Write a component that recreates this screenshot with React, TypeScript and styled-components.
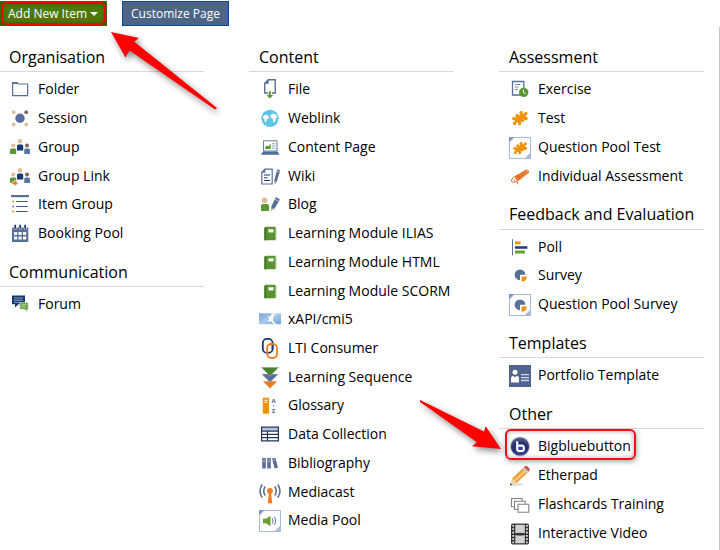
import React from 'react';
import styled, { createGlobalStyle, css } from 'styled-components';

const GlobalStyle = createGlobalStyle`
  *, *::before, *::after { box-sizing: border-box; }
  html { background: #fff; }
  body {
    margin: 0;
    overflow: hidden;
    color: #000;
    font-family: 'Open Sans', 'Noto Sans', sans-serif;
    font-size: 14px;
  }
`;

const Page = styled.div`
  display: flex;
  flex-direction: column;
  min-height: 100vh;
  margin-left: -1px;
`;

const Toolbar = styled.div`
  display: flex;
  gap: 15px;
  padding-top: 1px;
`;

const ButtonSlot = styled.div`
  position: relative;
`;

const Button = styled.button<{ $tone: 'green' | 'blue' }>`
  display: flex;
  align-items: center;
  gap: 3px;
  height: 25px;
  padding: 0 8px;
  border: 1px solid;
  border-radius: 0;
  color: #fff;
  font: 12px/17px 'Open Sans', 'Noto Sans', sans-serif;
  white-space: nowrap;
  cursor: pointer;
  ${({ $tone }) =>
    $tone === 'green'
      ? css`
          background: #4c7a06;
          border-color: #3c6400;
          box-shadow: inset 0 0 6px #2c4a00;
        `
      : css`
          background: #4c6586;
          border-color: #07489a;
        `}
`;

const Caret = styled.span`
  border: 4px solid transparent;
  border-top-color: #fff;
  border-bottom: 0;
`;

const ButtonMark = styled.span`
  position: absolute;
  inset: 1px 1px 1px 2px;
  border: 2px solid #f50008;
  border-radius: 6px;
  pointer-events: none;
`;

const Panel = styled.main`
  flex: 1;
  display: grid;
  grid-template-columns: repeat(3, 1fr);
  gap: 45px;
  margin-top: 1px;
  padding: 19px 15px 0 0;
  border-right: 1px solid #c4c4c4;
`;

const Group = styled.section`
  padding-bottom: 9px;
`;

const GroupTitle = styled.h2`
  margin: 0 0 7px;
  padding: 0 0 3px 10px;
  border-bottom: 1px solid #d9d9d9;
  font-size: 16px;
  font-weight: 400;
  line-height: 1.4;
  white-space: nowrap;
`;

const Items = styled.ul`
  margin: 0;
  padding: 0;
  list-style: none;
`;

const Item = styled.li`
  display: flex;
`;

const ItemLink = styled.a`
  position: relative;
  display: flex;
  gap: 7px;
  padding-left: 10px;
  color: #000;
  text-decoration: none;
`;

const Icon = styled.svg`
  flex: none;
  width: 22px;
  height: 22px;
`;

const Label = styled.span`
  padding-bottom: 9px;
  line-height: 1.41;
  white-space: nowrap;
`;

const ItemMark = styled.span`
  position: absolute;
  inset: -7px -5px 5px 6px;
  border: 2px solid #f01018;
  border-radius: 6px;
  box-shadow: inset 0 0 5px #0005, 1px 2px 5px #0005;
  pointer-events: none;
`;

const Arrow = styled.svg<{ $spot: 'button' | 'item' }>`
  position: absolute;
  z-index: 1;
  overflow: visible;
  pointer-events: none;
  fill: #fe0000;
  filter: drop-shadow(2px 3px 3px #0007);
  ${({ $spot }) =>
    $spot === 'button'
      ? css`
          top: 31px;
          left: 112px;
          width: 107px;
          height: 78px;
        `
      : css`
          top: -36px;
          left: -79px;
          width: 82px;
          height: 51px;
        `}
`;

const SLATE = '#586f98';
const NAVY = '#17376f';
const GREEN = '#5a9632';
const ORANGE = '#f07a22';
const AMBER = '#ee9209';
const TAN = '#dfbd98';
const BROWN = '#7d6660';

const people = (
  <>
    <circle cx="4.300" cy="8.600" r="2" fill={TAN} />
    <path d="M1 17v-4q0-1.600 1.600-1.600h3.400q1.200 0 1.200 1.600v4z" fill={GREEN} />
    <circle cx="11" cy="4.200" r="2.200" fill={TAN} />
    <path d="M8 13.500v-4.500q0-1.600 1.600-1.600h3q1.600 0 1.600 1.600v4.500z" fill={NAVY} />
    <circle cx="18" cy="8.600" r="2" fill={BROWN} />
    <path d="M15.200 17v-4q0-1.600 1.600-1.600h2.600q1.600 0 1.600 1.600v4z" fill="#56779f" />
  </>
);

const book = (
  <>
    <path d="M6.500 3.700H16.500V17.300H5.400V4.700z" fill="#5c9331" />
    <path d="M5.400 4.700H7.200V17.300H5.400z" fill="#3f7424" />
    <path d="M16.500 4.200h.8v12.600h-.8z" fill="#86b06a" />
    <path d="M9.400 6.300h5.200v3.100H9.400z" fill="#fff" />
  </>
);

const puzzle = (
  <g fill={AMBER}>
    <path d="M4.500 10.500L9 9.500 12 5.500 17 6.500 16.500 10.500 13 12 10.500 15.500 5.500 14.500z" />
    <circle cx="12.300" cy="5" r="2" />
    <circle cx="16.700" cy="5.600" r="1.900" />
    <circle cx="16.700" cy="10.500" r="2" />
    <circle cx="8.300" cy="8" r="1.900" />
    <circle cx="4.900" cy="10.500" r="1.800" />
    <circle cx="5.800" cy="15.200" r="1.900" />
    <circle cx="10.300" cy="15.300" r="2" />
    <circle cx="13.500" cy="12.500" r="1.700" />
    <circle cx="14.500" cy="4.500" r="1" fill="#fff" />
    <circle cx="8.100" cy="15.700" r="1.100" fill="#fff" />
    <circle cx="5" cy="12.900" r=".8" fill="#fff" />
    <circle cx="17.700" cy="8" r=".8" fill="#fff" />
  </g>
);

const pie = (
  <>
    <path d="M11 9.800V15.200A5.400 5.400 0 1 1 16.400 9.800z" fill={SLATE} />
    <path d="M12.600 11.600H18A5.200 5.200 0 0 1 12.600 16.800z" fill={AMBER} />
  </>
);

const poolFrame = (
  <>
    <path d="M0 0h22v22H0z" fill="#a9badb" />
    <path d="M5 1H21V16L16 21H1V5z" fill="#fff" />
    <path d="M0 0h5L0 5z" fill="#8297c0" />
  </>
);

const pencil = (
  <>
    <path d="M18.200 3.200l3 1-3.300 11-2.100 3-.6-3.500z" fill={SLATE} />
    <path d="M17.700 4.800l3 1" stroke="#fff" strokeWidth=".6" />
    <path d="M15.400 15l.4 3.200 1.900-2.500z" fill={TAN} />
  </>
);

const icons: Record<string, React.ReactNode> = {
  folder: (
    <>
      <path d="M3.600 5V3.600H8.200L9 5H18.600V16.600H3.600z" fill="none" stroke={SLATE} strokeWidth="1.200" />
      <path d="M3 3h5.200l1 2H3z" fill={SLATE} />
    </>
  ),
  session: (
    <>
      <circle cx="11" cy="10.300" r="4.700" fill="#5a6da0" />
      <circle cx="4.700" cy="4.200" r="1.900" fill={TAN} />
      <circle cx="17.200" cy="4.200" r="1.900" fill={BROWN} />
      <circle cx="4.700" cy="16.500" r="1.900" fill={TAN} />
      <circle cx="17.200" cy="16.500" r="1.900" fill={TAN} />
    </>
  ),
  group: people,
  groupLink: (
    <>
      {people}
      <path d="M3 15.800h2.600v-2l3.600 3.400-3.600 3.400v-2H3z" fill={ORANGE} stroke="#fff" strokeWidth=".5" />
    </>
  ),
  itemGroup: (
    <>
      <path d="M2 1h18v2.200H2z" fill={SLATE} />
      <path d="M7 7.500h11.600M7 12.500h11.600M7 17.500h11.600" stroke="#44557f" strokeWidth="1.100" />
      <circle cx="4.200" cy="7.500" r=".9" fill={AMBER} />
      <circle cx="4.200" cy="12.500" r=".9" fill={SLATE} />
      <circle cx="4.200" cy="17.500" r=".9" fill={AMBER} />
    </>
  ),
  booking: (
    <>
      <path d="M3 4.500h16.300V19H3z" fill={SLATE} />
      <path d="M4.800 2h2.600v4.200H4.800zM10 2h2.400v4.200H10zM14.900 2h2.600v4.200h-2.600z" fill="#fff" />
      <path d="M5.300 1.800h1.700v4H5.300zM10.300 1.800H12v4h-1.700zM15.300 1.800H17v4h-1.700z" fill={NAVY} />
      <path d="M5 9h3.200v3H5zM9.500 9h3.200v3H9.500zM14 9h3.200v3H14zM5 13.500h3.200v3H5zM9.500 13.500h3.200v3H9.500zM14 13.500h3.200v3H14z" fill="#fff" />
    </>
  ),
  forum: (
    <>
      <path d="M3 1.500h13v8.800H9.500L6 13.500V10.300H3z" fill={NAVY} />
      <path d="M5 4h9M5 6.200h9M5 8.300h6" stroke="#a9b8d3" strokeWidth=".8" />
      <path d="M10.800 8.500H19.300v6.800h-1v2.500l-2.700-2.500H10.800z" fill="#67a340" stroke="#fff" strokeWidth=".5" />
      <path d="M12.500 10.800h5M12.500 12.900h4" stroke="#d5e7c8" strokeWidth=".8" />
    </>
  ),
  file: (
    <>
      <path d="M9 14H5.700V4.300L9.300.8H16.200V14H13" fill="none" stroke={SLATE} strokeWidth="1.400" />
      <path d="M5.300 4.700L9.700.5v4.200z" fill={SLATE} />
      <path d="M9.800 12.300h2v3.600h2.400l-3.400 3.700-3.400-3.700h2.400z" fill={GREEN} />
    </>
  ),
  web: (
    <>
      <circle cx="11" cy="10.300" r="8.600" fill="#5fc4e8" />
      <path d="M4 8.500q1.500-2 4.200-1.600l.8 1.400 1 .4-.6 1.800-2 .9-.2 3.200-1.500-1-.3-2.500-1.300-1zM11 7.500l2.200-1.800 3.500.6 1.600 2.500-1.500 1.600-.5 3.200-1.600.8-1-2.200.1-2-1.900-.3z" fill="#fff" />
    </>
  ),
  contentPage: (
    <>
      <path d="M4.500 3.800H18V14H4.500z" fill="#fff" stroke="#6b7da1" strokeWidth="1" />
      <path d="M6.200 12V9.800l2-1 1.500.4 2-2.600V12z" fill={GREEN} />
      <path d="M13 6.800h3.500M13 9h3.500M13 11.200h3.500" stroke="#8493b3" strokeWidth=".9" />
      <path d="M4 14.500h14.500l2 3.300H2z" fill="#4e6b9c" />
    </>
  ),
  wiki: (
    <>
      <path d="M6 3.200H13.200V18H2.800V6.300z" fill="none" stroke={SLATE} strokeWidth="1.200" />
      <path d="M2.500 6.700L6.300 2.800v3.900z" fill={SLATE} />
      <path d="M5 9h6M5 11.800h3.500M5 14.500h6" stroke={NAVY} strokeWidth="1" />
      {pencil}
    </>
  ),
  blog: (
    <>
      <circle cx="5.700" cy="6.200" r="2.800" fill={TAN} />
      <path d="M2 17v-5q0-2 2-2h4q2 0 2 2v5z" fill={GREEN} />
      <path d="M16.800 3l4.200 2.400-5.500 9-3.400 2.200.3-4.200z" fill={SLATE} />
      <path d="M15.800 5l4 2.400" stroke="#fff" strokeWidth=".6" />
      <path d="M12.300 13.500l-.3 3.300 3-1.600z" fill={TAN} />
    </>
  ),
  book,
  xapi: (
    <>
      <defs>
        <linearGradient id="sky" x1="0" y1="0" x2="1" y2="1">
          <stop offset="0" stopColor="#7ba6da" />
          <stop offset=".5" stopColor="#a8caee" />
          <stop offset="1" stopColor="#6fa0d6" />
        </linearGradient>
      </defs>
      <path d="M0 4.300h22v10.900H0z" fill="url(#sky)" />
      <path d="M14.500 4.300q-3.400 1.200-2.500 3.800-1-1.600-3.400-.4 2 .6 1.800 2.300-.2 1.400-1.800 2.200 2.800 1.200 3.800-.5.300 2.500 3.500 3.500h2q-4.500-2.200-4-5.600.4-3.200 3.600-5.300z" fill="#fff" />
    </>
  ),
  lti: (
    <g fill="none" strokeWidth="1.800">
      <rect x="3.800" y=".9" width="9.800" height="14" rx="4.200" stroke={NAVY} />
      <rect x="8.200" y="6" width="9.800" height="14" rx="4.200" stroke={ORANGE} />
      <path d="M13.600 7v4" stroke={NAVY} />
    </g>
  ),
  sequence: (
    <>
      <path d="M4 14.200H18.200L11 21.600z" fill={ORANGE} />
      <path d="M2.500 7H19.500L11 15.400z" fill={SLATE} stroke="#fff" strokeWidth=".3" />
      <path d="M2 .2H20L11 9.200z" fill="#4c8030" stroke="#fff" strokeWidth=".3" />
    </>
  ),
  glossary: (
    <>
      <path d="M3.800 2.700h6.300v16H3.800z" fill={AMBER} />
      <path d="M5.200 5.300h3.500M5.200 7.200h3.500" stroke="#fff" strokeWidth=".9" />
      <g fill="#4f628d" fontFamily="Open Sans, sans-serif" fontSize="6" fontWeight="700">
        <text x="12.500" y="8">A</text>
        <text x="12.700" y="18">Z</text>
      </g>
      <path d="M14 10.800h1.300" stroke="#4f628d" />
    </>
  ),
  data: (
    <>
      <path d="M2.600 3.200H19.400V16.800H2.600z" fill="#fff" />
      <path d="M3 3.500h16v3.400H3z" fill="#b7c4df" />
      <path d="M2.600 3.200H19.400V16.800H2.600zM2.600 7.200H19.400M2.600 10.400H19.400M2.600 13.600H19.400M8.500 7.200V16.800" fill="none" stroke="#243460" strokeWidth="1.200" />
    </>
  ),
  bibliography: (
    <>
      <path d="M3.200 5h3.600v10.500H3.200zM8.200 5h3.600v10.500H8.200zM13 5.500l3.400-.8 2.600 10-3.400.8z" fill="#5b6e96" />
      <path d="M4.300 7h1.400M4.300 8.700h1.400M9.300 7h1.400M9.300 8.700h1.400M14.300 7.300l1.600-.4" stroke="#fff" strokeWidth=".7" />
    </>
  ),
  mediacast: (
    <>
      <circle cx="11" cy="9" r="2.900" fill={ORANGE} />
      <path d="M10 11h2l1.300 10.300H8.700z" fill={ORANGE} />
      <path d="M6.200 4.500q-3 4.500 0 9M3.200 2.500q-4.400 6.500 0 13M15.800 4.500q3 4.500 0 9M18.800 2.500q4.400 6.500 0 13" fill="none" stroke={SLATE} strokeWidth="1.600" />
    </>
  ),
  mediaPool: (
    <>
      {poolFrame}
      <path d="M4 8.800h3L11.500 5.800v10.400L7 13.200H4z" fill="#6a9f2d" />
      <path d="M13.200 8.300q1.600 2.700 0 5.400M15.400 6.900q2.500 4.100 0 8.200" fill="none" stroke="#7489b3" strokeWidth="1.100" />
    </>
  ),
  exercise: (
    <>
      <path d="M3.500 2.500H14.800V16H3.500z" fill="#fff" stroke={SLATE} strokeWidth="1.300" />
      <path d="M5.800 5.500h5.500M5.800 8h3.500M5.800 10.500h3" stroke="#6679a2" strokeWidth=".9" />
      <circle cx="14.700" cy="13.400" r="4.700" fill={GREEN} />
      <path d="M14.500 10.600V13.600l2.300 1.300" fill="none" stroke="#fff" strokeWidth=".9" />
    </>
  ),
  test: puzzle,
  testPool: (
    <>
      {poolFrame}
      <g transform="translate(1.500 2) scale(.88)">{puzzle}</g>
    </>
  ),
  assessment: (
    <>
      <path d="M5 10.500L16.700 3.800q2.800-.8 3.300 1.400.3 1.600-1 2.400L8.500 15.500z" fill="#e77a30" />
      <path d="M7.800 9.200l3.800 4" stroke="#b94d10" strokeWidth="1" />
      <path d="M5 11.300q-3 1.500-2.500 4.200 1.600 1.800 3.400.2.300-1.800-1.500-1.700M5.800 15.800l2.500-.2.200 2.800" fill="none" stroke="#d9713a" strokeWidth="1" />
      <circle cx="18.300" cy="5.600" r="1.100" fill="#f4a165" />
    </>
  ),
  poll: (
    <>
      <path d="M3.500 2.300v16" stroke={SLATE} strokeWidth="1" />
      <path d="M6 4.400h5.500v3H6z" fill={AMBER} />
      <path d="M6 9.200h12.400v2.600H6z" fill="#243f82" />
      <path d="M6 13.500h10v3H6z" fill="#68a033" />
    </>
  ),
  survey: pie,
  surveyPool: (
    <>
      {poolFrame}
      <g transform="translate(0 1)">{pie}</g>
    </>
  ),
  portfolio: (
    <>
      <path d="M0 0h22v22H0z" fill="#51648f" />
      <circle cx="6" cy="7.300" r="2.500" fill="#fff" />
      <path d="M2 17.500v-4q0-2.500 2-2.800l2 1.500 2-1.500q2 .3 2 2.800v4z" fill="#fff" />
      <path d="M12 9.700h8M12 12.600h8M12 15.500h8" stroke="#d3daea" strokeWidth="1.300" />
    </>
  ),
  bigblue: (
    <>
      <defs>
        <radialGradient id="ball" cx=".5" cy=".8" r=".8">
          <stop offset="0" stopColor="#3d4f9c" />
          <stop offset=".6" stopColor="#252c6c" />
          <stop offset="1" stopColor="#5c648f" />
        </radialGradient>
      </defs>
      <circle cx="11" cy="10.500" r="9.900" fill="#b9bdd2" />
      <circle cx="11" cy="10.500" r="9.100" fill="url(#ball)" />
      <path d="M8.200 5.200v7.800q0 2 2 2h2.600q2 0 2-2v-1.400q0-2-2-2H8.500" fill="none" stroke="#fff" strokeWidth="2.100" />
    </>
  ),
  etherpad: (
    <>
      <path d="M.5 20.800h12l2-2.300H3z" fill="#0002" />
      <path d="M3 13.500L14.300 2.800l4.800 4.500L7.500 18.200z" fill="#f5a13a" />
      <path d="M5 15.200L16.300 4.500l1.300 1.200L6.200 16.600z" fill="#ffd28a" />
      <path d="M3 13.500L1 20.500l6.500-2.300z" fill="#ecd3ab" />
      <path d="M1.600 18.300L1 20.500l2.200-.8z" fill="#333" />
      <path d="M13.200 3.800l1.600-1.500 4.900 4.500L18 8.400z" fill="#c9ccd3" />
      <path d="M14.800 2.300L16 1.100q1-.8 2.200.2l2 2q1 1.200.3 2.300l-.8 1.200z" fill="#cf5550" />
    </>
  ),
  cards: (
    <g fill="#fff" stroke="#828282" strokeWidth="1.100">
      <path d="M2.500 4.500h10.700v8.300H2.500z" />
      <path d="M5.500 7.200h10.700v8.300H5.500z" />
      <path d="M9 10.200h10.800v8H9z" />
    </g>
  ),
  video: (
    <>
      <rect x="2" y=".5" width="18" height="21" rx="2" fill="#333" />
      <path d="M6.300 1.800h9.500v8.400q-4.700-1-9.500 0zM6.300 12q4.700 1 9.500 0v8.200H6.300z" fill="#d0d3d4" />
      <path d="M4.200 2v18.500M17.900 2v18.500" stroke="#e8e8e8" strokeWidth="1.700" strokeDasharray="1.800 1.500" />
    </>
  ),
};

type Entry = { label: string; icon: string; marked?: boolean };
type Section = { title: string; items: Entry[] };

const columns: Section[][] = [
  [
    {
      title: 'Organisation',
      items: [
        { label: 'Folder', icon: 'folder' },
        { label: 'Session', icon: 'session' },
        { label: 'Group', icon: 'group' },
        { label: 'Group Link', icon: 'groupLink' },
        { label: 'Item Group', icon: 'itemGroup' },
        { label: 'Booking Pool', icon: 'booking' },
      ],
    },
    { title: 'Communication', items: [{ label: 'Forum', icon: 'forum' }] },
  ],
  [
    {
      title: 'Content',
      items: [
        { label: 'File', icon: 'file' },
        { label: 'Weblink', icon: 'web' },
        { label: 'Content Page', icon: 'contentPage' },
        { label: 'Wiki', icon: 'wiki' },
        { label: 'Blog', icon: 'blog' },
        { label: 'Learning Module ILIAS', icon: 'book' },
        { label: 'Learning Module HTML', icon: 'book' },
        { label: 'Learning Module SCORM', icon: 'book' },
        { label: 'xAPI/cmi5', icon: 'xapi' },
        { label: 'LTI Consumer', icon: 'lti' },
        { label: 'Learning Sequence', icon: 'sequence' },
        { label: 'Glossary', icon: 'glossary' },
        { label: 'Data Collection', icon: 'data' },
        { label: 'Bibliography', icon: 'bibliography' },
        { label: 'Mediacast', icon: 'mediacast' },
        { label: 'Media Pool', icon: 'mediaPool' },
      ],
    },
  ],
  [
    {
      title: 'Assessment',
      items: [
        { label: 'Exercise', icon: 'exercise' },
        { label: 'Test', icon: 'test' },
        { label: 'Question Pool Test', icon: 'testPool' },
        { label: 'Individual Assessment', icon: 'assessment' },
      ],
    },
    {
      title: 'Feedback and Evaluation',
      items: [
        { label: 'Poll', icon: 'poll' },
        { label: 'Survey', icon: 'survey' },
        { label: 'Question Pool Survey', icon: 'surveyPool' },
      ],
    },
    { title: 'Templates', items: [{ label: 'Portfolio Template', icon: 'portfolio' }] },
    {
      title: 'Other',
      items: [
        { label: 'Bigbluebutton', icon: 'bigblue', marked: true },
        { label: 'Etherpad', icon: 'etherpad' },
        { label: 'Flashcards Training', icon: 'cards' },
        { label: 'Interactive Video', icon: 'video' },
      ],
    },
  ],
];

export default function App() {
  return (
    <>
      <GlobalStyle />
      <Page>
        <Toolbar>
          <ButtonSlot>
            <Button type="button" $tone="green" aria-haspopup="true" aria-expanded="true">
              Add New Item
              <Caret />
            </Button>
            <ButtonMark />
            <Arrow $spot="button" viewBox="0 0 107 78" aria-hidden="true">
              <path d="M0 0L28 6 23.300 9.800 106 76 104 77.500 18.500 18.500 14.500 25.500z" />
            </Arrow>
          </ButtonSlot>
          <Button type="button" $tone="blue">
            Customize Page
          </Button>
        </Toolbar>
        <Panel>
          {columns.map((sections) => (
            <div key={sections[0].title}>
              {sections.map(({ title, items }) => (
                <Group key={title}>
                  <GroupTitle>{title}</GroupTitle>
                  <Items>
                    {items.map(({ label, icon, marked }) => (
                      <Item key={label}>
                        <ItemLink href="#">
                          <Icon viewBox="0 0 22 22" aria-hidden="true">
                            {icons[icon]}
                          </Icon>
                          <Label>{label}</Label>
                          {marked && (
                            <>
                              <ItemMark />
                              <Arrow $spot="item" viewBox="0 0 82 51" aria-hidden="true">
                                <path d="M0 0L64 31.500 65.700 26.300 81 49 52 46.300 57 42.300 0 2z" />
                              </Arrow>
                            </>
                          )}
                        </ItemLink>
                      </Item>
                    ))}
                  </Items>
                </Group>
              ))}
            </div>
          ))}
        </Panel>
      </Page>
    </>
  );
}
